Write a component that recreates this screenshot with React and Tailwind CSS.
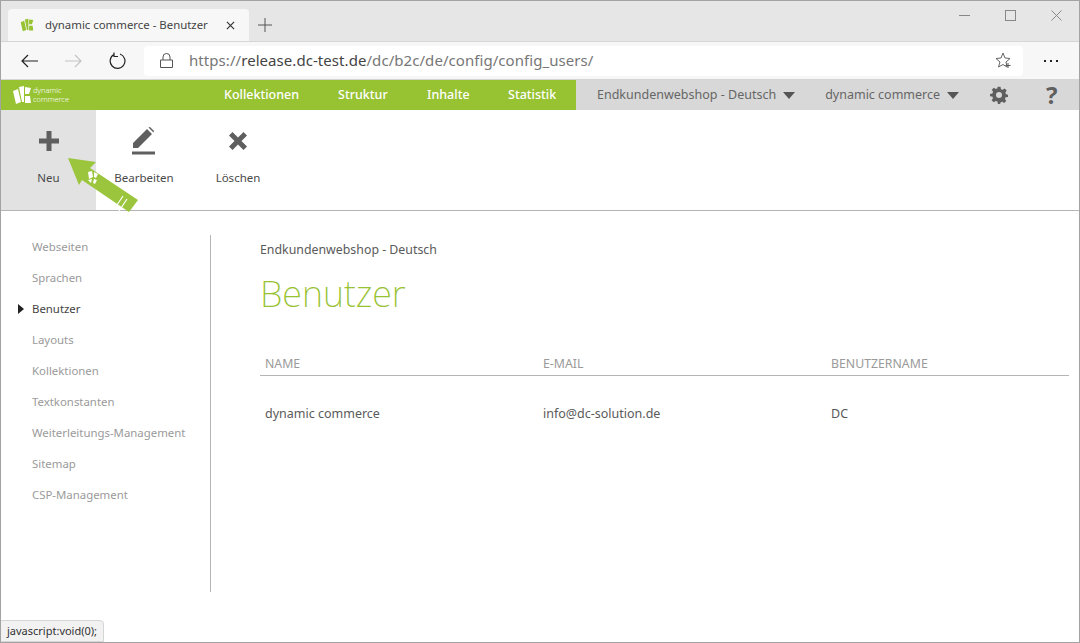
const font = { fontFamily: '"Noto Sans", sans-serif' };
function Logo({ c = "#fff", s = 20 }) {
  return (
    <svg width={s} height={s} viewBox="0 0 20 20" className="shrink-0">
      <path d="M1 6 L6 4 L9 17 L4 19 Z" fill={c} />
      <path d="M7 2 L12 1 L12 17 L10 17 Z" fill={c} />
      <path d="M13 2 L19 3 L17 9 L13 9 Z" fill={c} />
      <path d="M13 11 L18 11 L19 18 L13 18 Z" fill={c} />
    </svg>
  );
}
function Arrow() {
  return (
    <svg width="75" height="60" viewBox="0 0 75 60" className="absolute left-[66px] top-[156px]">
      <path d="M1 1 L29 5 L23 11 L71 43 L62 55 L15 23 L12 28 Z" fill="#9bc53d" />
      <path d="M56 39 L48 51 M60 42 L52 54" stroke="#fff" strokeWidth="1.2" />
      <path d="M21 15 L25 14 L26 20 L22 22 Z M27 15 L31 17 L29 21 L27 20 Z M27 22 L30 23 L28 27 L26 26 Z M21 23 L25 22 L24 26 Z" fill="#fff" />
    </svg>
  );
}
const side = ["Webseiten", "Sprachen", "Benutzer", "Layouts", "Kollektionen", "Textkonstanten", "Weiterleitungs-Management", "Sitemap", "CSP-Management"];
function Tool({ label, active, children }) {
  return (
    <div className={`h-full flex flex-col items-center pt-[14px] ${active ? "w-[95px] bg-[#e2e2e2]" : "w-[96px]"}`}>
      <div className="h-[34px] flex items-center justify-center">{children}</div>
      <div className="mt-[12px] text-[11.5px] leading-4 text-[#4a4a4a]">{label}</div>
    </div>
  );
}
export default function App() {
  return (
    <div style={font} className="relative w-[1080px] h-[643px] overflow-hidden bg-white border border-[#a3a3a3]">
      {/* tab strip */}
      <div className="h-[40px] bg-[#e6e6e6] flex items-end pl-[7px] relative">
        <div className="w-[241px] h-[32px] bg-[#f7f7f7] rounded-t-[4px] flex items-center pl-[12px] text-[#444]">
          <Logo c="#97c232" s={14} />
          <span className="ml-[11px] w-[181px] whitespace-nowrap text-[11.4px]">dynamic commerce - Benutzer</span>
          <svg width="9" height="9" viewBox="0 0 10 10"><path d="M1 1 L9 9 M9 1 L1 9" stroke="#333" strokeWidth="1.3" /></svg>
        </div>
        <svg width="14" height="14" viewBox="0 0 14 14" className="ml-[9px] mb-[9px]"><path d="M7 0 V14 M0 7 H14" stroke="#555" strokeWidth="1" /></svg>
        <div className="ml-auto flex items-start pt-[9px] h-[40px] pr-[4px] gap-[35px] self-start">
          <svg width="11" height="11" viewBox="0 0 11 11"><path d="M0 5.5 H11" stroke="#888" /></svg>
          <svg width="11" height="11" viewBox="0 0 11 11"><rect x="0.5" y="0.5" width="10" height="10" fill="none" stroke="#888" /></svg>
          <svg width="11" height="11" viewBox="0 0 11 11" className="mr-[13px]"><path d="M0.5 0.5 L10.5 10.5 M10.5 0.5 L0.5 10.5" stroke="#888" /></svg>
        </div>
      </div>
      {/* address */}
      <div className="h-[39px] bg-[#f7f7f7] border-t border-b border-[#d6d6d6] flex items-center pl-[20px] pr-[20px]">
        <svg width="17" height="14" viewBox="0 0 17 14"><path d="M1 7 H17 M7 1 L1 7 L7 13" fill="none" stroke="#222" strokeWidth="1.2" /></svg>
        <svg width="17" height="14" viewBox="0 0 17 14" className="ml-[27px]"><path d="M0 7 H16 M10 1 L16 7 L10 13" fill="none" stroke="#c4c4c4" strokeWidth="1.2" /></svg>
        <svg width="17" height="17" viewBox="0 0 17 17" className="ml-[27px]"><path d="M5 2.5 A7.4 7.4 0 1 0 11 2 M5 0.5 V4.5 H9" fill="none" stroke="#222" strokeWidth="1.2" /></svg>
        <div className="ml-[18px] w-[879px] h-[30px] bg-white rounded-[4px] flex items-center pl-[16px] pr-[11px]">
          <svg width="13" height="15" viewBox="0 0 13 15"><path d="M3 7 V4 A3.5 3.5 0 0 1 10 4 V7 M0.5 7 H12.5 V14.5 H0.5 Z" fill="none" stroke="#555" /></svg>
          <span className="ml-[16px] text-[15px] tracking-[0.06px] text-[#777]">https://<span className="text-[#444]">release.dc-test.de</span>/dc/b2c/de/config/config_users/</span>
          <svg width="17" height="17" viewBox="0 0 17 17" className="ml-auto"><path d="M8 1 L10 6 L15 6.5 L11 10 L12 15 L8 12.5 L3.5 15 L5 10 L1 6.5 L6 6 Z" fill="none" stroke="#666" /><path d="M13 11 V16 M10.5 13.5 H15.5" stroke="#555" /></svg>
        </div>
        <span className="ml-[21px] flex gap-[4px]"><i className="w-[2px] h-[2px] bg-[#222]"></i><i className="w-[2px] h-[2px] bg-[#222]"></i><i className="w-[2px] h-[2px] bg-[#222]"></i></span>
      </div>
      {/* app nav */}
      <div className="h-[30px] bg-[#d8d8d8] flex text-[12.5px]">
        <div className="w-[575px] bg-[#97c232] flex items-center text-white font-medium">
          <div className="w-[223px] pl-[11px] flex items-center gap-[1px]">
            <Logo s={20} />
            <div className="text-[7.5px] leading-[9px] font-light"><div>dynamic</div><div>commerce</div></div>
          </div>
          <span className="w-[114px]">Kollektionen</span>
          <span className="w-[89px]">Struktur</span>
          <span className="w-[81px]">Inhalte</span>
          <span>Statistik</span>
        </div>
        <div className="flex-1 flex items-center text-[#666]">
          <span className="ml-[21px]">Endkundenwebshop - Deutsch</span>
          <span className="ml-[7px] w-0 h-0 border-x-[6px] border-x-transparent border-t-[7px] border-t-[#555]"></span>
          <span className="ml-[30px]">dynamic commerce</span>
          <span className="ml-[7px] w-0 h-0 border-x-[6px] border-x-transparent border-t-[7px] border-t-[#555]"></span>
          <svg width="18" height="18" viewBox="0 0 24 24" className="ml-[31px]"><path fill="#5f5f5f" fillRule="evenodd" d="M10 1h4l.6 3.2 2.2.9L19.500 3.300l2.800 2.800-1.800 2.700.9 2.200L24 11.500v3l-3.200.6-.9 2.200 1.800 2.700-2.800 2.800-2.700-1.800-2.200.9L13.500 24h-3l-.6-3.200-2.200-.9-2.700 1.800-2.800-2.800 1.800-2.700-.9-2.200L0 13.500v-3l3.200-.6.9-2.200L2.300 5l2.800-2.800 2.700 1.800 2.200-.9zM12 8a4 4 0 1 0 0 8 4 4 0 0 0 0-8z" /></svg>
          <span className="ml-[38px] text-[24px] leading-none font-bold text-[#5f5f5f]">?</span>
        </div>
      </div>
      {/* toolbar */}
      <div className="h-[101px] border-b border-[#b5b5b5] flex">
        <Tool label="Neu" active>
          <svg width="20" height="20" viewBox="0 0 20 20"><path d="M7.500 0 H12.500 V7.500 H20 V12.500 H12.500 V20 H7.500 V12.500 H0 V7.500 H7.500 Z" fill="#5f5f5f" /></svg>
        </Tool>
        <div className="w-[94px]">
          <Tool label="Bearbeiten">
            <svg width="24" height="28" viewBox="0 0 24 28"><path d="M1 16 L15 2 L20 7 L6 21 H1 Z M16.500 0.500 L18 0 L22 4 L21.500 5.500 Z" fill="#5f5f5f" /><rect x="0" y="24.500" width="23" height="3" fill="#5f5f5f" /></svg>
          </Tool>
        </div>
        <div className="w-[94px]">
          <Tool label="Löschen">
            <svg width="18" height="18" viewBox="0 0 18 18"><path d="M3.500 0 L9 5.500 L14.500 0 L18 3.500 L12.500 9 L18 14.500 L14.500 18 L9 12.500 L3.500 18 L0 14.500 L5.500 9 L0 3.500 Z" fill="#5f5f5f" /></svg>
          </Tool>
        </div>
      </div>
      {/* content */}
      <div className="flex pt-[24px]">
        <div className="w-[210px] h-[357px] border-r border-[#b5b5b5] pl-[31px] pt-0 text-[11.4px] text-[#9a9a9a]">
          <div className="-mt-[4px]">
            {side.map((s) => (
              <div key={s} className={`h-[31px] flex items-center relative ${s === "Benutzer" ? "text-[#444]" : ""}`}>
                {s === "Benutzer" && <span className="absolute left-[-14px] w-0 h-0 border-y-[5px] border-y-transparent border-l-[6px] border-l-[#222]"></span>}
                {s}
              </div>
            ))}
          </div>
        </div>
        <div className="ml-[49px] w-[809px]">
          <div className="mt-[7px] text-[12.35px] leading-4 text-[#5a5a5a]">Endkundenwebshop - Deutsch</div>
          <h1 className="mt-[11px] text-[36px] leading-[50px] font-extralight text-[#97c232]">Benutzer</h1>
          <div className="mt-[35px] h-[22px] border-b border-[#b5b5b5] flex items-center text-[12.3px] text-[#9a9a9a]">
            <span className="pl-[5px] w-[283px]">NAME</span>
            <span className="w-[288px]">E-MAIL</span>
            <span>BENUTZERNAME</span>
          </div>
          <div className="mt-[30px] flex text-[12.5px] leading-4 text-[#5a5a5a]">
            <span className="pl-[5px] w-[283px]">dynamic commerce</span>
            <span className="w-[288px]">info@dc-solution.de</span>
            <span>DC</span>
          </div>
        </div>
      </div>
      <Arrow />
      <div className="absolute left-[-1px] bottom-0 h-[22px] px-[6px] flex items-center text-[11px] text-[#333] bg-[#f2f2f2] border border-[#d5d5d5] rounded-tr-[4px]">javascript:void(0);</div>
    </div>
  );
}
